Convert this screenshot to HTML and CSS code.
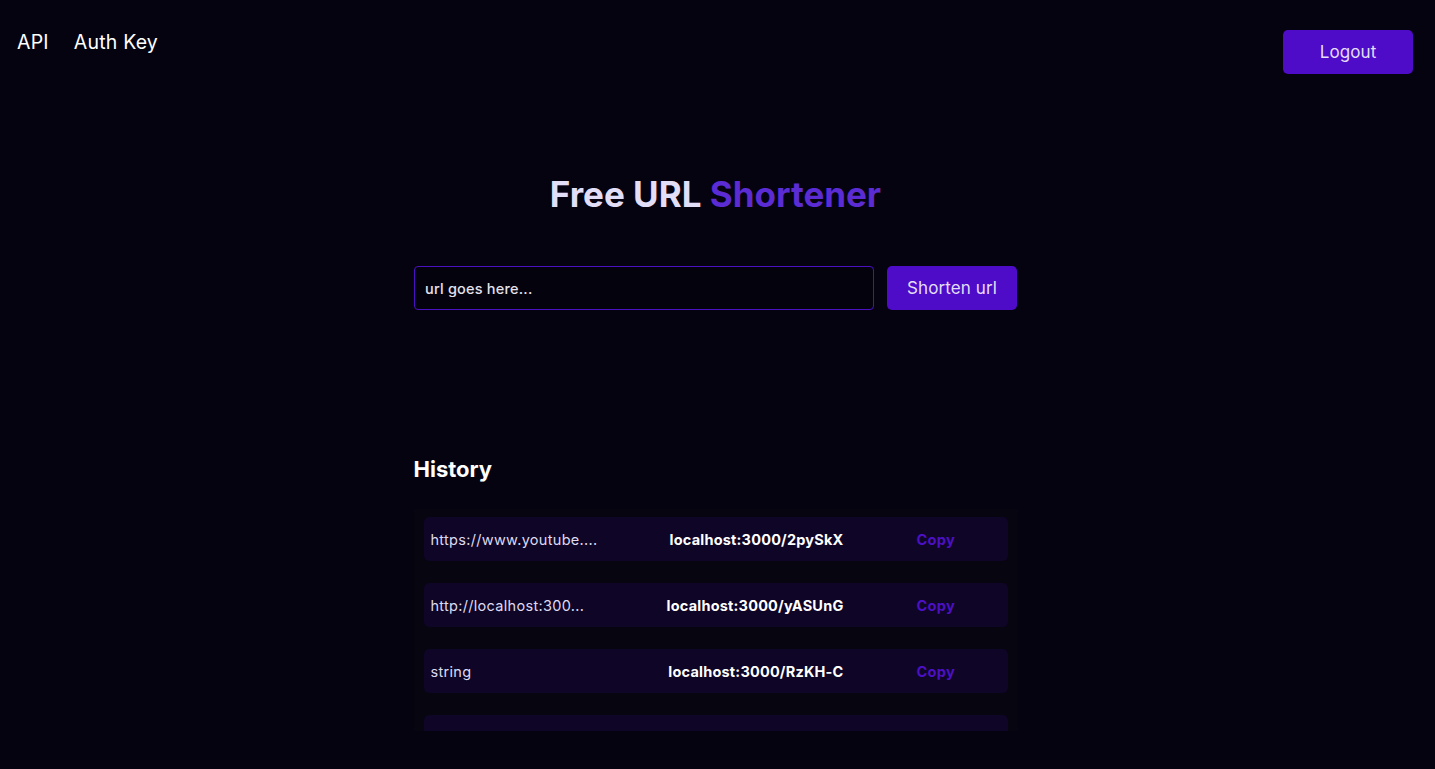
FILE: index.html
```html
<!DOCTYPE html>
<html>
<head>
<meta charset="utf-8">
<link rel="stylesheet" href="styles.css">
</head>
<body>
<header class="topbar">
  <nav class="nav">
    <a class="nav-link">API</a>
    <a class="nav-link">Auth Key</a>
  </nav>
  <button class="btn btn-logout">Logout</button>
</header>
<main class="main">
  <h1 class="title">Free URL <span class="accent">Shortener</span></h1>
  <form class="shorten-form">
    <input class="url-input" type="text" placeholder="url goes here...">
    <button class="btn btn-shorten" type="button">Shorten url</button>
  </form>
  <section class="history">
    <h2 class="history-title">History</h2>
    <div class="history-list">
      <div class="row">
        <span class="orig">https://www.youtube....</span>
        <span class="short">localhost:3000/2pySkX</span>
        <span class="copy">Copy</span>
      </div>
      <div class="row">
        <span class="orig">http://localhost:300...</span>
        <span class="short">localhost:3000/yASUnG</span>
        <span class="copy">Copy</span>
      </div>
      <div class="row">
        <span class="orig">string</span>
        <span class="short">localhost:3000/RzKH-C</span>
        <span class="copy">Copy</span>
      </div>
      <div class="row"></div>
    </div>
  </section>
</main>
</body>
</html>
```
FILE: styles.css
```css
* { box-sizing: border-box; }
html, body { margin: 0; padding: 0; }
body {
  background: #050310;
  font-family: Inter, "Noto Sans", sans-serif;
  color: #ffffff;
  height: 769px;
  overflow: hidden;
}
.topbar {
  display: flex;
  justify-content: space-between;
  align-items: flex-start;
  padding: 30px 22px 0 17px;
}
.nav {
  display: flex;
  gap: 25px;
}
.nav-link {
  font-size: 19.5px;
  line-height: 24px;
  letter-spacing: 0.2px;
  color: #ffffff;
  cursor: pointer;
}
.btn {
  border: none;
  border-radius: 5px;
  background: #4e0bc8;
  color: #e4defa;
  font-family: Inter, "Noto Sans", sans-serif;
  font-size: 17px;
  letter-spacing: 0.1px;
  height: 44px;
  width: 130px;
  cursor: pointer;
}
.main {
  display: flex;
  flex-direction: column;
  align-items: center;
  padding-right: 4px;
}
.title {
  margin: 96px 0 0;
  font-size: 35px;
  line-height: 48px;
  font-weight: 700;
  color: #e2def7;
}
.accent { color: #5b2cd3; }
.shorten-form {
  margin-top: 48px;
  display: flex;
  gap: 13px;
}
.url-input {
  width: 460px;
  height: 44px;
  border: 1px solid #4a10c2;
  border-radius: 4px;
  background: #04020d;
  padding: 0 10px;
  font-family: Inter, "Noto Sans", sans-serif;
  font-size: 14.5px;
  letter-spacing: 0.2px;
  font-weight: 500;
  color: #ffffff;
  outline: none;
}
.url-input::placeholder { color: #e4e2ee; opacity: 1; }
.history {
  margin-top: 144px;
  width: 604px;
}
.history-title {
  margin: 0;
  font-size: 22px;
  line-height: 30px;
  font-weight: 700;
  color: #ffffff;
}
.history-list {
  margin-top: 25px;
  height: 222px;
  overflow: hidden;
  background: #07050f;
  padding: 8px 10px 0 10px;
  display: flex;
  flex-direction: column;
  gap: 22px;
}
.row {
  flex: none;
  height: 44px;
  border-radius: 5px;
  background: #0f0526;
  display: grid;
  grid-template-columns: 200px 213px 1fr;
  align-items: center;
  padding: 0 7px;
  font-size: 14.5px;
  letter-spacing: 0.3px;
}
.orig { color: #dedbf1; white-space: nowrap; }
.short { font-weight: 700; color: #ffffff; text-align: right; white-space: nowrap; letter-spacing: 0.2px; }
.copy { font-weight: 700; color: #4c10c3; padding-left: 73px; }
```
